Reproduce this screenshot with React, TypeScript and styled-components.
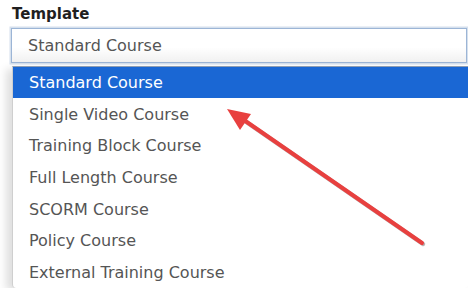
import React from "react";
import styled, { createGlobalStyle } from "styled-components";

const Global = createGlobalStyle`
  html, body { margin: 0; padding: 0; background: #ffffff; }
  body { font-family: "DejaVu Sans", Verdana, sans-serif; overflow: hidden; }
`;

const Page = styled.div`
  position: relative;
  width: 468px;
  height: 288px;
  overflow: hidden;
  display: flex;
  flex-direction: column;
`;

const Label = styled.div`
  margin: 5px 0 0 12px;
  font-size: 15px;
  line-height: 18px;
  font-weight: bold;
  color: #1f1f1f;
`;

const Select = styled.div`
  margin: 5px 0 0 11px;
  width: 456px;
  height: 37px;
  box-sizing: border-box;
  border: 1px solid #9cb5d6;
  box-shadow: 0 0 0 1.5px #d5e0ed;
  background: linear-gradient(#ffffff 0%, #ffffff 55%, #f1f1f1 100%);
  display: flex;
  align-items: center;
  padding-left: 16px;
  font-size: 16px;
  color: #555555;
`;

const List = styled.ul`
  list-style: none;
  margin: 3px 0 0 12px;
  padding: 0;
  width: 455px;
  border-top: 1px solid #8d9db3;
  border-left: 1px solid #cfcfcf;
  border-radius: 0 0 4px 4px;
  background: #ffffff;
  box-shadow: -6px 3px 9px rgba(0, 0, 0, 0.13);
`;

const Item = styled.li<{ $active?: boolean }>`
  height: 31.6px;
  display: flex;
  align-items: center;
  padding-left: 16px;
  font-size: 16px;
  color: ${(p) => (p.$active ? "#ffffff" : "#555555")};
  background: ${(p) => (p.$active ? "#1a67d4" : "transparent")};
`;

const ArrowLayer = styled.svg`
  position: absolute;
  left: 0;
  top: 0;
  pointer-events: none;
`;

const options = [
  "Standard Course",
  "Single Video Course",
  "Training Block Course",
  "Full Length Course",
  "SCORM Course",
  "Policy Course",
  "External Training Course",
];

export default function App() {
  return (
    <Page>
      <Global />
      <Label>Template</Label>
      <Select>Standard Course</Select>
      <List>
        {options.map((o, i) => (
          <Item key={o} $active={i === 0}>
            {o}
          </Item>
        ))}
      </List>
      <ArrowLayer width="468" height="288" viewBox="0 0 468 288">
        <line x1="423" y1="244" x2="242" y2="119" stroke="rgba(60,40,40,0.35)" strokeWidth="4.5" strokeLinecap="round" />
        <line x1="422" y1="243" x2="241" y2="118" stroke="#e8403f" strokeWidth="4" strokeLinecap="round" />
        <polygon points="227,109 251,114 240,130" fill="#e8403f" />
      </ArrowLayer>
    </Page>
  );
}
